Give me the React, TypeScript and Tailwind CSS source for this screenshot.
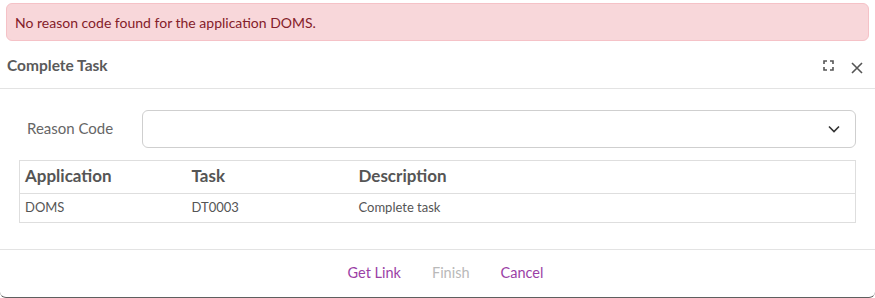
import React from 'react';

const rows = [{ app: 'DOMS', task: 'DT0003', desc: 'Complete task' }];

export default function App() {
  return (
    <div className="w-[875px] h-[298px] bg-white overflow-hidden font-['Lato','Noto_Sans',sans-serif] flex flex-col border-b border-[#5f5f5f] rounded-b-[6px]">
      {/* error alert */}
      <div className="mx-[6px] mt-[3px] h-[38px] flex items-center px-[8px] bg-[#f8d7da] border border-[#f5c2c7] rounded-[6px] text-[14px] text-[#842029]">
        No reason code found for the application DOMS.
      </div>

      {/* header */}
      <div className="h-[48px] flex items-center pl-[7px] pr-[12px] border-b border-[#e3e3e3]">
        <h2 className="text-[15.5px] font-bold text-[#5a5a5a] pt-[2px]">Complete Task</h2>
        <div className="ml-auto flex items-center gap-[17px] pt-[2px]">
          <svg width="11" height="11" viewBox="0 0 11 11" fill="none" stroke="#555" strokeWidth="1.6">
            <path d="M1 4V1h3M7 1h3v3M10 7v3H7M4 10H1V7" />
          </svg>
          <svg width="12" height="12" viewBox="0 0 12 12" fill="none" stroke="#555" strokeWidth="1.6" className="mt-[4px]">
            <path d="M1 1l10 10M11 1L1 11" />
          </svg>
        </div>
      </div>

      {/* body */}
      <div className="px-[19px] pt-[21px]">
        <div className="flex items-center">
          <label className="w-[123px] pl-[8px] pb-[2px] text-[15px] text-[#666]">Reason Code</label>
          <div className="flex-1 h-[38px] border border-[#cfcfcf] rounded-[6px] flex items-center justify-end pr-[15px]">
            <svg width="12" height="8" viewBox="0 0 12 8" fill="none" stroke="#333" strokeWidth="1.6">
              <path d="M1 1.5l5 5 5-5" />
            </svg>
          </div>
        </div>

        <table className="mt-[12px] w-full border-collapse border border-[#dedede] text-[#555]">
          <thead>
            <tr className="h-[33px] border-b border-[#dedede]">
              <th className="w-[166px] text-left font-bold text-[17px] pl-[5px] pb-[2px]">Application</th>
              <th className="w-[167px] text-left font-bold text-[17px] pl-[6px] pb-[2px]">Task</th>
              <th className="text-left font-bold text-[17px] pl-[6px] pb-[2px]">Description</th>
            </tr>
          </thead>
          <tbody>
            {rows.map((r) => (
              <tr key={r.task} className="h-[29px]">
                <td className="text-[13px] pl-[5px]">{r.app}</td>
                <td className="text-[13px] pl-[6px]">{r.task}</td>
                <td className="text-[13px] pl-[6px]">{r.desc}</td>
              </tr>
            ))}
          </tbody>
        </table>
      </div>

      {/* footer */}
      <div className="mt-[26px] flex-1 border-t border-[#e3e3e3] flex items-center justify-center pl-[16px] pb-[2px] gap-[31px] text-[14.5px]">
        <button className="text-[#9b3fa6]">Get Link</button>
        <button className="text-[#b9b9b9]" disabled>Finish</button>
        <button className="text-[#9b3fa6]">Cancel</button>
      </div>
    </div>
  );
}
